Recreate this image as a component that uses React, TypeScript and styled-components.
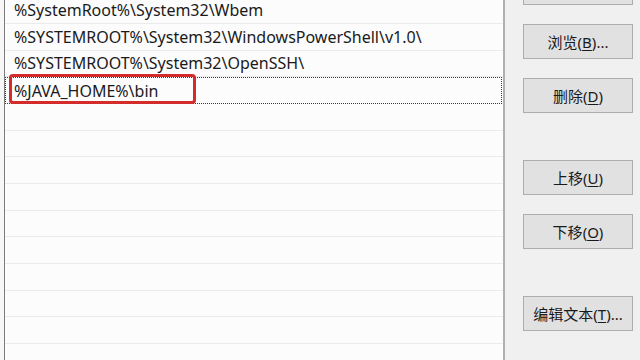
import React from 'react';
import styled, { createGlobalStyle } from 'styled-components';

const GlobalStyle = createGlobalStyle`
  html, body {
    margin: 0;
    padding: 0;
    background: #f0f0f0;
  }
  #root {
    width: 640px;
    height: 360px;
    overflow: hidden;
  }
`;

const Dialog = styled.div`
  display: flex;
  width: 640px;
  height: 360px;
  overflow: hidden;
  background: #f0f0f0;
  font-family: 'Noto Sans', 'Noto Sans CJK SC', sans-serif;
  color: #1a1a1a;
`;

const Gutter = styled.div`
  width: 4px;
  flex: none;
  background: #f7f7f7;
`;

const PathList = styled.div`
  width: 498px;
  flex: none;
  background: #fcfcfc;
  border-left: 1px solid #7c7c7c;
  border-right: 2px solid #b0b0b0;
  display: flex;
  flex-direction: column;
`;

const Rows = styled.div`
  margin-top: -2.67px;
  display: flex;
  flex-direction: column;
`;

const Row = styled.div<{ $focused?: boolean }>`
  position: relative;
  box-sizing: border-box;
  height: 26.67px;
  flex: none;
  display: flex;
  align-items: center;
  padding-left: 9px;
  font-size: 16px;
  white-space: nowrap;
  border-bottom: 1px solid #ebebeb;
  ${({ $focused }) =>
    $focused &&
    `
    border: 1px dotted #3a3a3a;
    margin-right: 1px;
    padding-left: 8px;
  `}
`;

const Highlight = styled.span`
  position: absolute;
  left: 3px;
  top: -4px;
  width: 187px;
  height: 30px;
  box-sizing: border-box;
  border: 3px solid #d42b2b;
  border-radius: 4px;
`;

const ButtonColumn = styled.div`
  flex: 1;
  display: flex;
  flex-direction: column;
  padding-left: 18px;
  margin-top: -30px;
`;

const Button = styled.div<{ $gap: number }>`
  box-sizing: border-box;
  width: 110px;
  height: 35px;
  flex: none;
  margin-top: ${({ $gap }) => $gap}px;
  background: #e1e1e1;
  border: 1px solid #adadad;
  display: flex;
  align-items: center;
  justify-content: center;
  font-size: 15px;
  color: #1a1a1a;
  white-space: nowrap;
`;

const Key = styled.span`
  text-decoration: underline;
  text-underline-offset: 2px;
`;

const paths = [
  '%SystemRoot%\\System32\\Wbem',
  '%SYSTEMROOT%\\System32\\WindowsPowerShell\\v1.0\\',
  '%SYSTEMROOT%\\System32\\OpenSSH\\',
  '%JAVA_HOME%\\bin',
  '', '', '', '', '', '', '', '', '', '',
];

// the first button is scrolled mostly out of view, only its lower edge shows
const buttons = [
  { label: '', key: '', tail: '', gap: 0 },
  { label: '浏览', key: 'B', tail: '...', gap: 19 },
  { label: '删除', key: 'D', tail: '', gap: 19 },
  { label: '上移', key: 'U', tail: '', gap: 47 },
  { label: '下移', key: 'O', tail: '', gap: 19 },
  { label: '编辑文本', key: 'T', tail: '...', gap: 47 },
];

export default function App() {
  return (
    <Dialog>
      <GlobalStyle />
      <Gutter />
      <PathList>
        <Rows>
          {paths.map((p, i) => (
            <Row key={i} $focused={i === 3}>
              {i === 3 && <Highlight />}
              {p}
            </Row>
          ))}
        </Rows>
      </PathList>
      <ButtonColumn>
        {buttons.map((b, i) => (
          <Button key={i} $gap={b.gap}>
            {b.key && (
              <>
                {b.label}(<Key>{b.key}</Key>){b.tail}
              </>
            )}
          </Button>
        ))}
      </ButtonColumn>
    </Dialog>
  );
}
